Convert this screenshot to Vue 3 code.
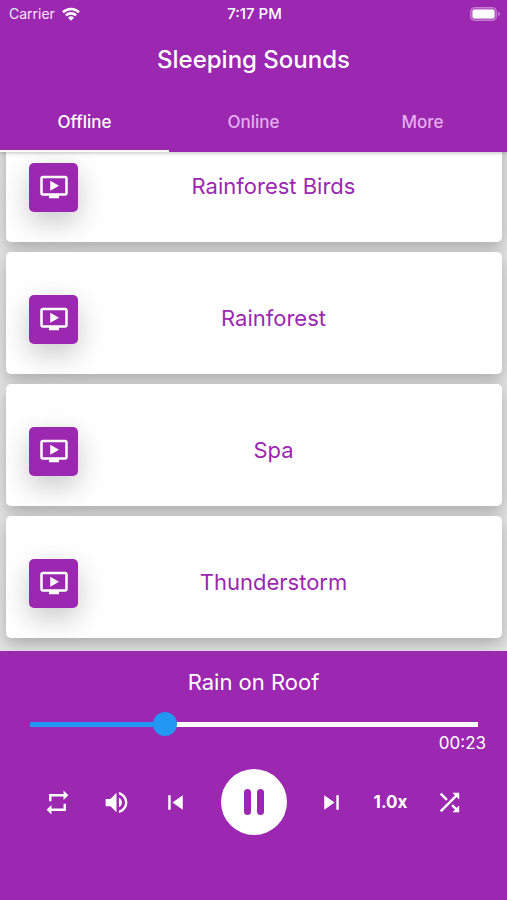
<script setup>
import { ref, computed } from 'vue'

const tabs = ['Offline', 'Online', 'More']
const active = ref('Offline')
const sounds = ['Rainforest Birds', 'Rainforest', 'Spa', 'Thunderstorm']
const position = ref(29)
const fill = computed(() => ({
  '--fill': `calc(12px + (100% - 24px) * ${position.value / 100})`,
}))
const icons = {
  repeat: 'M7 7h10v3l4-4-4-4v3H5v6h2V7zm10 10H7v-3l-4 4 4 4v-3h12v-6h-2v4z',
  volume: 'M3 9v6h4l5 5V4L7 9H3zm13.5 3c0-1.77-1.02-3.29-2.5-4.03v8.05c1.48-.73 2.5-2.25 2.5-4.02zM14 3.23v2.06c2.89.86 5 3.54 5 6.71s-2.11 5.85-5 6.71v2.06c4.01-.91 7-4.49 7-8.77s-2.99-7.86-7-8.77z',
  previous: 'M6 6h2v12H6zm3.5 6l8.5 6V6z',
  next: 'M6 18l8.5-6L6 6v12zM16 6v12h2V6h-2z',
  shuffle: 'M10.59 9.17L5.41 4 4 5.41l5.17 5.17 1.42-1.41zM14.5 4l2.04 2.04L4 18.59 5.41 20 17.96 7.46 20 9.5V4h-5.5zm.33 9.41l-1.41 1.41 3.13 3.13L14.5 20H20v-5.5l-2.04 2.04-3.13-3.13z',
}
</script>

<template>
  <div class="screen">
    <header class="top">
      <div class="status">
        <span class="carrier">
          Carrier
          <svg class="wifi" viewBox="0 0 18 14" aria-hidden="true">
            <path d="M1 5.2a11.6 11.6 0 0 1 16 0" />
            <path d="M3.9 8.4a7.4 7.4 0 0 1 10.2 0" />
            <path class="dot" d="M9 13.8l-3-3a4.3 4.3 0 0 1 6 0z" />
          </svg>
        </span>
        <span class="clock">7:17 PM</span>
        <svg class="battery" viewBox="0 0 30 14" aria-hidden="true">
          <rect class="shell" x="0.5" y="0.5" width="26" height="13" rx="4" />
          <rect class="charge" x="2.5" y="2.5" width="22" height="9" rx="2" />
          <path class="cap" d="M28 4.8q2 .8 2 2.2t-2 2.2z" />
        </svg>
      </div>
      <h1>Sleeping Sounds</h1>
      <nav class="tabs" role="tablist">
        <button
          v-for="tab in tabs"
          :key="tab"
          type="button"
          role="tab"
          class="tab"
          :class="{ active: tab === active }"
          :aria-selected="tab === active"
          @click="active = tab"
        >{{ tab }}</button>
      </nav>
    </header>

    <main class="list">
      <article v-for="sound in sounds" :key="sound" class="card">
        <span class="tile">
          <svg viewBox="0 0 24 24" aria-hidden="true">
            <path d="M21 3H3c-1.11 0-2 .89-2 2v12c0 1.1.89 2 2 2h5v2h8v-2h5c1.1 0 1.99-.9 1.99-2L23 5c0-1.11-.9-2-2-2zm0 14H3V5h18v12zm-5-6l-7 4V7z" />
          </svg>
        </span>
        <h2>{{ sound }}</h2>
      </article>
    </main>

    <footer class="player">
      <p class="track">Rain on Roof</p>
      <input v-model.number="position" class="seek" type="range" min="0" max="100" aria-label="Seek" :style="fill" />
      <p class="time">00:23</p>
      <div class="controls">
        <button type="button" aria-label="Repeat"><svg viewBox="0 0 24 24"><path :d="icons.repeat" /></svg></button>
        <button type="button" aria-label="Volume"><svg viewBox="0 0 24 24"><path :d="icons.volume" /></svg></button>
        <button type="button" aria-label="Previous"><svg viewBox="0 0 24 24"><path :d="icons.previous" /></svg></button>
        <span class="middle">
          <button type="button" class="pause" aria-label="Pause">
            <svg viewBox="0 0 66 66">
              <rect x="23" y="20" width="7" height="26" rx="3.5" />
              <rect x="36" y="20" width="7" height="26" rx="3.5" />
            </svg>
          </button>
        </span>
        <button type="button" aria-label="Next"><svg viewBox="0 0 24 24"><path :d="icons.next" /></svg></button>
        <button type="button" class="speed">1.0x</button>
        <button type="button" aria-label="Shuffle"><svg viewBox="0 0 24 24"><path :d="icons.shuffle" /></svg></button>
      </div>
    </footer>
  </div>
</template>

<style>
body {
  margin: 0;
}
</style>

<style scoped>
.screen {
  display: flex;
  flex-direction: column;
  height: 100vh;
  overflow: hidden;
  background: #e4e4e4;
  color: #fff;
  font-family: Inter, "Liberation Sans", sans-serif;
}
h1,
h2,
p {
  margin: 0;
}
button {
  padding: 0;
  border: 0;
  background: none;
  color: inherit;
  font: inherit;
  cursor: pointer;
}
.top {
  position: relative;
  z-index: 1;
  flex: none;
  background: #9c27b0;
  box-shadow: 0 1px 4px rgba(0, 0, 0, 0.25);
}
.status {
  display: grid;
  grid-template-columns: 1fr auto 1fr;
  align-items: center;
  height: 27px;
  padding: 0 7px 0 9px;
  font-size: 14px;
}
.carrier {
  display: flex;
  align-items: center;
  gap: 7px;
  color: #f6e6f8;
}
.wifi {
  width: 18px;
  height: 14px;
  fill: none;
  stroke: #fff;
  stroke-width: 2.6;
}
.wifi .dot {
  fill: #fff;
  stroke: none;
}
.clock {
  font-size: 15px;
  font-weight: 500;
}
.battery {
  justify-self: end;
  width: 30px;
  height: 14px;
}
.shell {
  fill: #b45cc3;
  stroke: #c47dd0;
}
.charge {
  fill: #fff;
}
.cap {
  fill: #c47dd0;
}
h1 {
  height: 65px;
  font-size: 24px;
  font-weight: 500;
  line-height: 65px;
  text-align: center;
}
.tabs {
  display: grid;
  grid-template-columns: repeat(3, 1fr);
  height: 60px;
}
.tab {
  padding-top: 2px;
  border-bottom: 2px solid transparent;
  color: #e5aeee;
  font-size: 17px;
  font-weight: 500;
}
.tab.active {
  border-bottom-color: #fff;
  color: #fff;
}
.list {
  display: flex;
  flex: 1;
  flex-direction: column;
  justify-content: flex-end;
  gap: 10px;
  min-height: 0;
  padding: 0 5px 13px 6px;
}
.card {
  display: flex;
  flex: none;
  align-items: center;
  box-sizing: border-box;
  height: 122px;
  padding: 12px 23px 0;
  border-radius: 5px;
  background: #fff;
  box-shadow: 0 6px 16px rgba(0, 0, 0, 0.25);
  color: #9c27b0;
}
.tile {
  display: grid;
  place-items: center;
  width: 49px;
  height: 49px;
  border-radius: 5px;
  background: #9c27b0;
  box-shadow: 0 10px 28px rgba(0, 0, 0, 0.22);
}
.tile svg {
  width: 30px;
  height: 30px;
  fill: #fff;
}
h2 {
  flex: 1;
  padding: 0 10px 2px 0;
  font-size: 22px;
  font-weight: 400;
  text-align: center;
}
.player {
  display: flex;
  z-index: 1;
  flex: none;
  flex-direction: column;
  box-sizing: border-box;
  height: 249px;
  padding-top: 16px;
  background: #9c27b0;
}
.track {
  font-size: 22px;
  line-height: 30px;
  text-align: center;
}
.seek {
  height: 24px;
  margin: 15px 29px 0 30px;
  appearance: none;
  background: linear-gradient(to right, #2196f3 var(--fill), #fff var(--fill)) center / 100% 5px no-repeat;
}
.seek::-webkit-slider-thumb {
  width: 24px;
  height: 24px;
  border-radius: 50%;
  appearance: none;
  background: #2196f3;
}
.time {
  padding-right: 21px;
  font-size: 17px;
  line-height: 14px;
  text-align: right;
}
.controls {
  display: flex;
  align-items: center;
  justify-content: center;
  padding-top: 19px;
}
.controls button {
  display: grid;
  place-items: center;
  width: 59px;
  height: 59px;
}
.controls svg {
  width: 29px;
  height: 29px;
  fill: #fff;
}
.middle {
  display: grid;
  place-items: center;
  width: 97px;
}
.controls .pause {
  width: 66px;
  height: 66px;
  border-radius: 50%;
  background: #fff;
}
.controls .pause svg {
  width: 66px;
  height: 66px;
  fill: #9c27b0;
}
.controls .speed {
  font-size: 17px;
  font-weight: 700;
}
</style>
